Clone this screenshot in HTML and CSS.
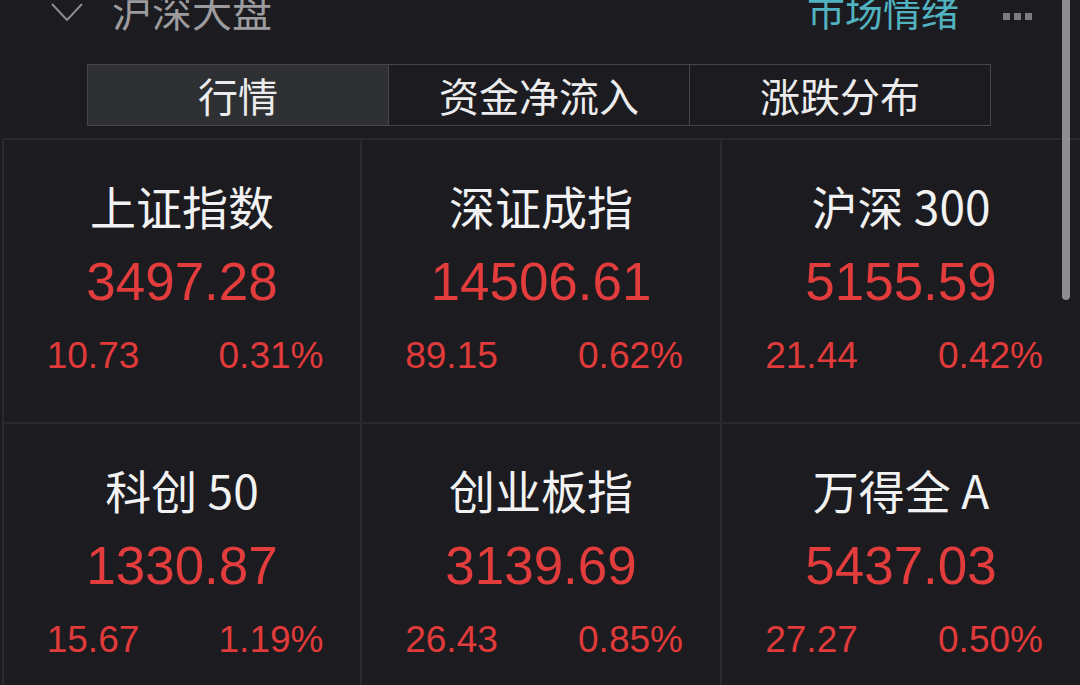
FILE: index.html
```html
<!DOCTYPE html>
<html lang="zh-CN">
<head>
<meta charset="utf-8">
<title>沪深大盘</title>
<link rel="stylesheet" href="styles.css">
</head>
<body>
<div class="panel">
  <div class="header">
    <svg class="chevron" width="32" height="18" viewBox="0 0 32 18"><polyline points="1,1 16,17 31,1" fill="none" stroke="#8c8c90" stroke-width="2"/></svg>
    <span class="title">沪深大盘</span>
    <span class="spacer"></span>
    <span class="mood">市场情绪</span>
    <span class="more"><i></i><i></i><i></i></span>
  </div>
  <div class="tabs">
    <div class="tab active">行情</div>
    <div class="tab">资金净流入</div>
    <div class="tab">涨跌分布</div>
  </div>
  <div class="grid">
    <div class="card">
      <div class="name">上证指数</div>
      <div class="price">3497.28</div>
      <div class="chg"><span>10.73</span><span>0.31%</span></div>
    </div>
    <div class="card">
      <div class="name">深证成指</div>
      <div class="price">14506.61</div>
      <div class="chg"><span>89.15</span><span>0.62%</span></div>
    </div>
    <div class="card">
      <div class="name">沪深 300</div>
      <div class="price">5155.59</div>
      <div class="chg"><span>21.44</span><span>0.42%</span></div>
    </div>
    <div class="card">
      <div class="name">科创 50</div>
      <div class="price">1330.87</div>
      <div class="chg"><span>15.67</span><span>1.19%</span></div>
    </div>
    <div class="card">
      <div class="name">创业板指</div>
      <div class="price">3139.69</div>
      <div class="chg"><span>26.43</span><span>0.85%</span></div>
    </div>
    <div class="card">
      <div class="name">万得全 A</div>
      <div class="price">5437.03</div>
      <div class="chg"><span>27.27</span><span>0.50%</span></div>
    </div>
  </div>
  <div class="scrollbar"></div>
</div>
</body>
</html>
```

FILE: styles.css
```css
html, body {
  margin: 0;
  padding: 0;
  background: #1b1b20;
}
body {
  width: 1080px;
  height: 685px;
  overflow: hidden;
  font-family: "Noto Sans CJK SC", "Noto Sans", sans-serif;
}
.panel {
  position: relative;
  width: 1080px;
  height: 685px;
  overflow: hidden;
  background: #1b1b20;
}
.header {
  display: flex;
  align-items: center;
  height: 48px;
  margin-top: -14px;
  padding-left: 51px;
  padding-right: 48px;
}
.chevron {
  margin-top: 4px;
  margin-right: 29px;
}
.title {
  font-size: 40px;
  line-height: 48px;
  color: #9c9c9f;
}
.spacer {
  flex: 1;
}
.mood {
  font-size: 38px;
  line-height: 48px;
  color: #52b3c0;
}
.more {
  display: flex;
  gap: 4px;
  margin-left: 44px;
  margin-top: 12px;
}
.more i {
  display: block;
  width: 7px;
  height: 7px;
  background: #7c7c80;
}
.tabs {
  display: flex;
  box-sizing: border-box;
  width: 904px;
  height: 62px;
  margin: 30px 0 0 87px;
  border: 1px solid #45454a;
}
.tab {
  flex: 1;
  display: flex;
  align-items: center;
  justify-content: center;
  font-size: 40px;
  color: #ececec;
  border-left: 1px solid #45454a;
}
.tab:first-child {
  border-left: none;
}
.tab.active {
  background: #2e3033;
}
.grid {
  display: grid;
  grid-template-columns: 356px 358px 358px;
  grid-template-rows: 282px 282px;
  gap: 2px;
  margin: 12px 0 0 2px;
  padding: 2px 0 0 2px;
  background: #29292e;
}
.card {
  background: #1b1b20;
  display: flex;
  flex-direction: column;
  align-items: center;
  padding-top: 34px;
}
.name {
  font-size: 46px;
  line-height: 62px;
  color: #f2f2f2;
}
.price {
  margin-top: 14px;
  font-family: "Liberation Sans", Arial, sans-serif;
  font-size: 53px;
  line-height: 64px;
  color: #e23c3c;
}
.chg {
  margin-top: 17px;
  display: flex;
  width: 100%;
  font-family: "Liberation Sans", Arial, sans-serif;
  font-size: 37px;
  line-height: 50px;
  color: #e03a3a;
}
.chg span {
  flex: 1;
  text-align: center;
}
.scrollbar {
  position: absolute;
  left: 1062px;
  top: -10px;
  width: 8px;
  height: 310px;
  border-radius: 4px;
  background: #8d8d92;
}
```
